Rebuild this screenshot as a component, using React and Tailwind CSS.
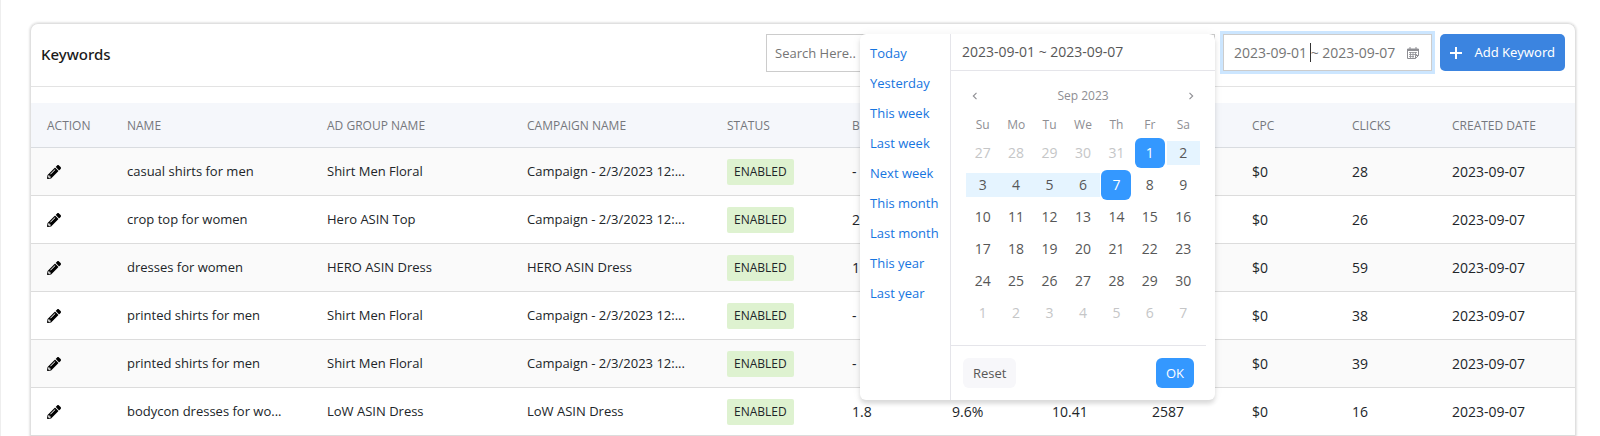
import { useState } from "react";

const columns = [
  { label: "Action", width: "w-[80px]" },
  { label: "Name", width: "w-[200px]" },
  { label: "Ad Group Name", width: "w-[200px]" },
  { label: "Campaign Name", width: "w-[200px]" },
  { label: "Status", width: "w-[125px]" },
  { label: "B", width: "w-[100px]" },
  { label: "", width: "w-[100px]" },
  { label: "", width: "w-[100px]" },
  { label: "", width: "w-[100px]" },
  { label: "CPC", width: "w-[100px]" },
  { label: "Clicks", width: "w-[100px]" },
  { label: "Created Date", width: "" },
];

const rows = [
  ["casual shirts for men", "Shirt Men Floral", "Campaign - 2/3/2023 12:...", "-", "", "", "", "$0", "28"],
  ["crop top for women", "Hero ASIN Top", "Campaign - 2/3/2023 12:...", "2", "", "", "", "$0", "26"],
  ["dresses for women", "HERO ASIN Dress", "HERO ASIN Dress", "1", "", "", "", "$0", "59"],
  ["printed shirts for men", "Shirt Men Floral", "Campaign - 2/3/2023 12:...", "-", "", "", "", "$0", "38"],
  ["printed shirts for men", "Shirt Men Floral", "Campaign - 2/3/2023 12:...", "-", "", "", "", "$0", "39"],
  ["bodycon dresses for wo...", "LoW ASIN Dress", "LoW ASIN Dress", "1.8", "9.6%", "10.41", "2587", "$0", "16"],
];

const ranges = [
  "Today",
  "Yesterday",
  "This week",
  "Last week",
  "Next week",
  "This month",
  "Last month",
  "This year",
  "Last year",
];

const weekdays = ["Su", "Mo", "Tu", "We", "Th", "Fr", "Sa"];

const days = Array.from({ length: 42 }, (_, i) => {
  const n = i - 4;
  if (n < 1) return { day: n + 31, outside: true };
  if (n > 30) return { day: n - 30, outside: true };
  return { day: n, outside: false };
});

function PencilIcon() {
  return (
    <svg viewBox="0 0 512 512" className="size-[14px]" fill="currentColor" aria-hidden="true">
      <path d="M497.9 142.1l-46.1 46.1c-4.7 4.7-12.3 4.7-17 0l-111-111c-4.7-4.7-4.7-12.3 0-17l46.1-46.1c18.700-18.700 49.100-18.700 67.900 0l60.100 60.100c18.800 18.700 18.800 49.100 0 67.900zM284.200 99.800L21.600 362.400.4 483.900c-2.900 16.400 11.400 30.600 27.800 27.800l121.500-21.300 262.600-262.600c4.700-4.700 4.700-12.300 0-17l-111-111c-4.800-4.700-12.400-4.700-17.100 0zM124.100 339.900c-5.500-5.500-5.500-14.300 0-19.800l154-154c5.500-5.500 14.300-5.500 19.800 0s5.500 14.300 0 19.800l-154 154c-5.500 5.500-14.300 5.500-19.800 0zM88 424h48v36.300l-64.500 11.300-31.100-31.100L51.700 376H88v48z" />
    </svg>
  );
}

function CalendarIcon() {
  return (
    <svg viewBox="0 0 12 12" className="size-[12px] text-[#8e8e93]" fill="none" stroke="currentColor" aria-hidden="true">
      <path d="M0.500 2v9.500h8l3-3V2z" />
      <path d="M0 2.500h12M0 3.500h12M3 0v2.500M9 0v2.500" />
      <path d="M2 5.500h8M2 7.500h8M2 9.500h5M3.500 5v6M6 5v6M8.500 5v3.500" strokeWidth="0.800" />
      <path d="M8.500 11.500v-3h3" />
    </svg>
  );
}

function Chevron({ flip }) {
  return (
    <svg viewBox="0 0 8 8" className="size-[8px]" fill="none" stroke="currentColor" strokeWidth="1.100" aria-hidden="true">
      <path d={flip ? "M2.500 0.800L5.700 4L2.500 7.200" : "M5.500 0.800L2.300 4L5.500 7.200"} />
    </svg>
  );
}

function DayCell({ day, outside }) {
  const selected = !outside && (day === 1 || day === 7);
  const inRange = !outside && day >= 2 && day <= 6;
  const band = inRange ? "bg-[#e5f4ff]" : "";
  let tone = "text-[#575757]";
  if (outside) tone = "text-[#c5c6c7]";
  if (selected) tone = "rounded-md bg-[#3498ff] text-white";
  return (
    <td className="h-8 p-0">
      <div className={"flex h-6 items-center justify-center " + band}>
        <button type="button" className={"flex size-[30px] shrink-0 items-center justify-center " + tone}>
          {day}
        </button>
      </div>
    </td>
  );
}

function RangePopup() {
  return (
    <div className="absolute top-0 right-full z-10 mr-2 flex h-[366px] w-[355px] rounded-md bg-white text-sm shadow-[0_4px_4px_rgba(0,0,0,0.12),0_0_10px_rgba(0,0,0,0.06)]">
      <div className="flex w-[91px] flex-col border-r border-[#e5e5ea] pt-1 pl-[10px]">
        {ranges.map((r) => (
          <button key={r} type="button" className="h-[30px] text-left text-[13px] whitespace-nowrap text-[#1675e0]">
            {r}
          </button>
        ))}
      </div>
      <div className="flex flex-1 flex-col">
        <div className="flex h-[37px] items-center border-b border-[#e5e5ea] px-[11px] text-[#575757]">
          2023-09-01 ~ 2023-09-07
        </div>
        <div className="px-[15px] pt-3">
          <div className="flex h-[26px] items-center justify-between px-[5px] text-xs text-[#8e8e93]">
            <button type="button" aria-label="Previous month"><Chevron /></button>
            <button type="button">Sep 2023</button>
            <button type="button" aria-label="Next month"><Chevron flip /></button>
          </div>
          <table className="mt-1 w-full table-fixed border-collapse">
            <thead>
              <tr>
                {weekdays.map((d) => (
                  <th key={d} className="h-6 p-0 text-xs font-normal text-[#8e8e93]">{d}</th>
                ))}
              </tr>
            </thead>
            <tbody>
              {[0, 1, 2, 3, 4, 5].map((w) => (
                <tr key={w}>
                  {days.slice(w * 7, w * 7 + 7).map((d, i) => (
                    <DayCell key={i} {...d} />
                  ))}
                </tr>
              ))}
            </tbody>
          </table>
        </div>
        <div className="mt-auto mr-[9px] flex items-center justify-between border-t border-[#e5e5ea] p-3">
          <button type="button" className="h-[30px] rounded-md bg-[#f7f7fa] px-[10px] text-[13px] text-[#575757]">Reset</button>
          <button type="button" className="h-[30px] rounded-md bg-[#3498ff] px-[10px] text-[13px] text-white">OK</button>
        </div>
      </div>
    </div>
  );
}

export default function App() {
  const [dates, setDates] = useState("2023-09-01 ~ 2023-09-07");
  return (
    <div className="border-l border-[#eeeeee] bg-white pt-[23px] pr-6 pl-[29px] font-['Open_Sans','Noto_Sans',sans-serif] text-sm text-[#212529]">
      <section className="rounded-t-lg border border-b-0 border-[#e0e0e0] shadow-[0_0_2px_1px_rgba(0,0,0,0.10)]">
        <header className="flex h-[63px] items-start border-b border-[#e3e3e3] px-[10px] pt-[10px]">
          <h1 className="flex h-[42px] items-center font-['Noto_Sans',sans-serif] text-[15px] font-medium text-[#1a1a1a]">Keywords</h1>
          <input
            type="text"
            aria-label="Search keywords"
            placeholder="Search Here.."
            className="ml-auto h-[38px] w-[449px] border border-[#cccccc] px-2 text-[13px] placeholder:text-[#757575]"
          />
          <div className="relative ml-2">
            <label className="flex h-[37px] w-[209px] items-center border border-[#cccccc] pr-3 pl-[10px] ring-3 ring-[#cce6ff]">
              <input
                type="text"
                aria-label="Date range"
                value={dates}
                onChange={(e) => setDates(e.target.value)}
                className="min-w-0 flex-1 text-[#757575] outline-none"
              />
              <CalendarIcon />
            </label>
            <span className="absolute top-[9px] left-[87px] h-[19px] w-px bg-[#333333]" />
            <RangePopup />
          </div>
          <button type="button" className="ml-2 flex h-[37px] w-[125px] items-center justify-between rounded-[5px] bg-[#3b84e0] px-[10px] font-['Noto_Sans',sans-serif] text-[13px] text-white">
            <svg viewBox="0 0 12 12" className="size-[12px]" stroke="currentColor" strokeWidth="2" aria-hidden="true">
              <path d="M6 0v12M0 6h12" />
            </svg>
            Add Keyword
          </button>
        </header>
        <table className="mt-4 w-full table-fixed border-separate border-spacing-0 text-left">
          <thead>
            <tr className="bg-[#f5f7fb]">
              {columns.map((c, i) => (
                <th key={i} className={"h-[45px] border-b border-[#d9dce0] px-4 pt-[2px] text-xs font-normal whitespace-nowrap text-[#75777d] uppercase " + c.width}>
                  {c.label}
                </th>
              ))}
            </tr>
          </thead>
          <tbody>
            {rows.map((r, i) => (
              <tr key={i} className="odd:bg-[#fafafa] [&>td]:h-12 [&>td]:border-b [&>td]:border-[#dcdcdc]">
                <td className="px-4">
                  <button type="button" aria-label={"Edit " + r[0]} className="block text-black"><PencilIcon /></button>
                </td>
                <td className="pl-4 text-[13px] whitespace-nowrap">{r[0]}</td>
                <td className="pl-4 text-[13px] whitespace-nowrap">{r[1]}</td>
                <td className="pl-4 text-[13px] whitespace-nowrap">{r[2]}</td>
                <td className="px-4">
                  <span className="flex h-[26px] w-fit items-center rounded-xs bg-[#def2d0] px-[7px] text-xs">ENABLED</span>
                </td>
                {r.slice(3).map((v, j) => (
                  <td key={j} className="px-4">{v}</td>
                ))}
                <td className="px-4">2023-09-07</td>
              </tr>
            ))}
          </tbody>
        </table>
      </section>
    </div>
  );
}
